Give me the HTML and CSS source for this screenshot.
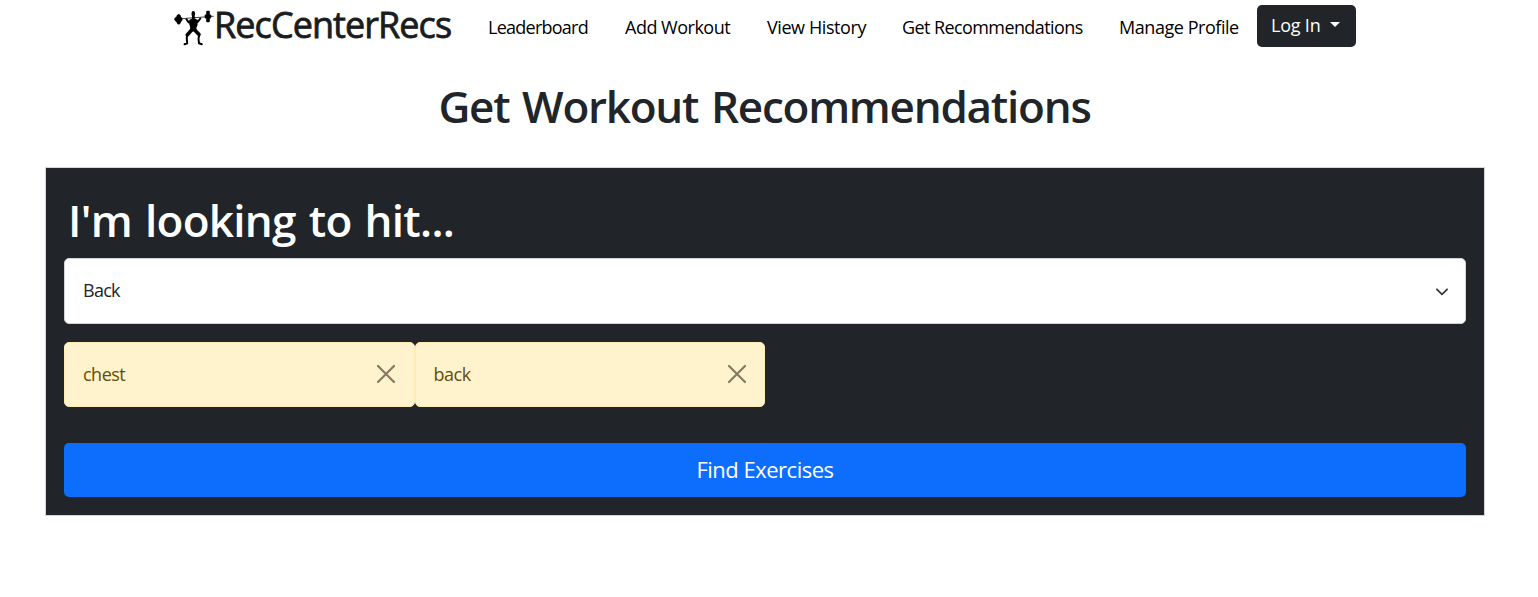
FILE: index.html
```html
<!DOCTYPE html>
<html lang="en">
<head>
<meta charset="utf-8">
<title>RecCenterRecs</title>
<link rel="stylesheet" href="styles.css">
</head>
<body>
<nav class="navbar">
  <a class="brand">
    <svg class="brand-logo" width="41" height="36" viewBox="0 0 41 36" aria-hidden="true">
      <path d="M0 9.300L39.700 6.300" stroke="#444" stroke-width="1.100"/>
      <ellipse cx="4.700" cy="9.200" rx="2.700" ry="5.300"/>
      <ellipse cx="4.500" cy="9.200" rx="4" ry="2.800"/>
      <rect x="32.200" y=".8" width="3.600" height="11.500" rx="1"/>
      <rect x="30.700" y="4.500" width="6.500" height="4" rx="1"/>
      <ellipse cx="19.300" cy="3.800" rx="1.800" ry="2.900"/>
      <path d="M18 6h2.600l.4 2.500 2.800 1.500-.3 5-1.200 3 .4 3.500h-6.900l.4-4-1-3.500.1-4L18 8.500z"/>
      <g fill="none" stroke="#000" stroke-linecap="round" stroke-linejoin="round">
        <path d="M12.500 9.300l2.300 3.200 2.500-2M26.300 8.500l-2.600 3.500-2.500-1.500" stroke-width="2"/>
        <path d="M17.200 20.500l-4 4.500M21.200 20.500l3.800 4" stroke-width="3.600"/>
        <path d="M13 25l-.2 4 .4 4.300-2.600 1M25.200 24.500l-.7 4.500.5 4.300 2.800.9" stroke-width="2"/>
      </g>
    </svg>
    <span class="brand-name">RecCenterRecs</span>
  </a>
  <div class="nav-links">
    <a class="nav-link w-leaderboard">Leaderboard</a>
    <a class="nav-link w-add">Add Workout</a>
    <a class="nav-link w-history">View History</a>
    <a class="nav-link w-recs">Get Recommendations</a>
    <a class="nav-link w-profile">Manage Profile</a>
  </div>
  <button class="login" type="button"><span>Log In</span><i class="caret"></i></button>
</nav>
<h1 class="page-title">Get Workout Recommendations</h1>
<main class="card">
  <h2 class="card-title">I'm looking to hit...</h2>
  <div class="select">
    <span>Back</span>
    <svg width="18" height="18" viewBox="0 0 16 16" aria-hidden="true"><path d="M3.500 6.500l4.500 4.500 4.500-4.500" fill="none" stroke="#343a40" stroke-width="1.600" stroke-linecap="round" stroke-linejoin="round"/></svg>
  </div>
  <div class="alerts">
    <div class="alert"><span>chest</span><svg class="close" viewBox="0 0 20 20" aria-hidden="true"><path d="M2 2l16 16M18 2l-16 16"/></svg></div>
    <div class="alert"><span>back</span><svg class="close" viewBox="0 0 20 20" aria-hidden="true"><path d="M2 2l16 16M18 2l-16 16"/></svg></div>
  </div>
  <button class="find" type="button">Find Exercises</button>
</main>
</body>
</html>
```
FILE: styles.css
```css
* { box-sizing: border-box; }
body {
  margin: 0;
  background: #fff;
  color: #212529;
  font-family: "Segoe UI", "Open Sans", "Noto Sans", sans-serif;
  font-size: 18px;
  line-height: 27px;
  letter-spacing: -0.5px;
}
button { font: inherit; letter-spacing: inherit; border: 0; }
.navbar { display: flex; align-items: flex-start; height: 53px; padding-left: 174px; }
.brand { display: flex; width: 296px; color: #1a1d20; }
.brand-logo { flex: none; margin-top: 10px; }
.brand-name {
  margin-left: -1px;
  font-size: 36px;
  line-height: 49px;
  letter-spacing: -0.93px;
  white-space: nowrap;
  -webkit-text-stroke: 0.8px currentColor;
}
.nav-links { display: flex; padding-top: 14px; color: #000; }
.nav-link { padding: 0 18px; white-space: nowrap; }
.w-leaderboard { width: 137px; letter-spacing: -0.75px; }
.w-add { width: 142px; }
.w-history { width: 135px; letter-spacing: -0.42px; }
.w-recs { width: 217px; letter-spacing: -0.59px; }
.w-profile { width: 156px; letter-spacing: -0.45px; }
.login {
  display: flex;
  width: 99px;
  height: 42px;
  margin-top: 5px;
  padding: 7px 14px;
  border-radius: 5px;
  background: #212529;
  color: #fff;
  letter-spacing: -0.2px;
}
.login span { width: 59px; text-align: left; }
.caret { margin-top: 10px; border: 5.500px solid transparent; border-top-color: #fff; border-bottom: 0; }
.page-title {
  margin: 26px 0 0;
  padding-right: 9px;
  text-align: center;
  font-size: 44px;
  line-height: 54px;
  font-weight: 600;
  letter-spacing: -1.24px;
  word-spacing: 2.500px;
}
.card {
  width: 1440px;
  height: 349px;
  margin: 34px 0 0 45px;
  padding: 25px 18px 0;
  border: 1px solid #d3d4d5;
  background: #212529;
}
.card-title {
  margin: 0 0 11px 4px;
  color: #fff;
  font-size: 44px;
  line-height: 54px;
  font-weight: 600;
  letter-spacing: -0.7px;
  word-spacing: 2.200px;
}
.select {
  display: flex;
  align-items: center;
  justify-content: space-between;
  height: 66px;
  padding: 0 14px 0 18px;
  border: 1px solid #ced4da;
  border-radius: 5px;
  background: #fff;
}
.select span { margin-top: -1px; letter-spacing: -0.75px; }
.alerts { display: flex; margin-top: 18px; }
.alert {
  display: flex;
  align-items: center;
  justify-content: space-between;
  width: 350.500px;
  height: 65px;
  padding: 0 17.500px 0 18px;
  border: 1px solid #ffecb5;
  border-radius: 5px;
  background: #fff3cd;
  color: #664d03;
}
.close { width: 20px; height: 20px; margin-top: -1px; fill: none; stroke: #857963; stroke-width: 2.200; stroke-linecap: round; }
.find {
  display: block;
  width: 100%;
  height: 54px;
  margin-top: 36px;
  padding: 0 0 2px;
  border-radius: 5px;
  background: #0d6efd;
  color: #fff;
  font-size: 22px;
}
```
